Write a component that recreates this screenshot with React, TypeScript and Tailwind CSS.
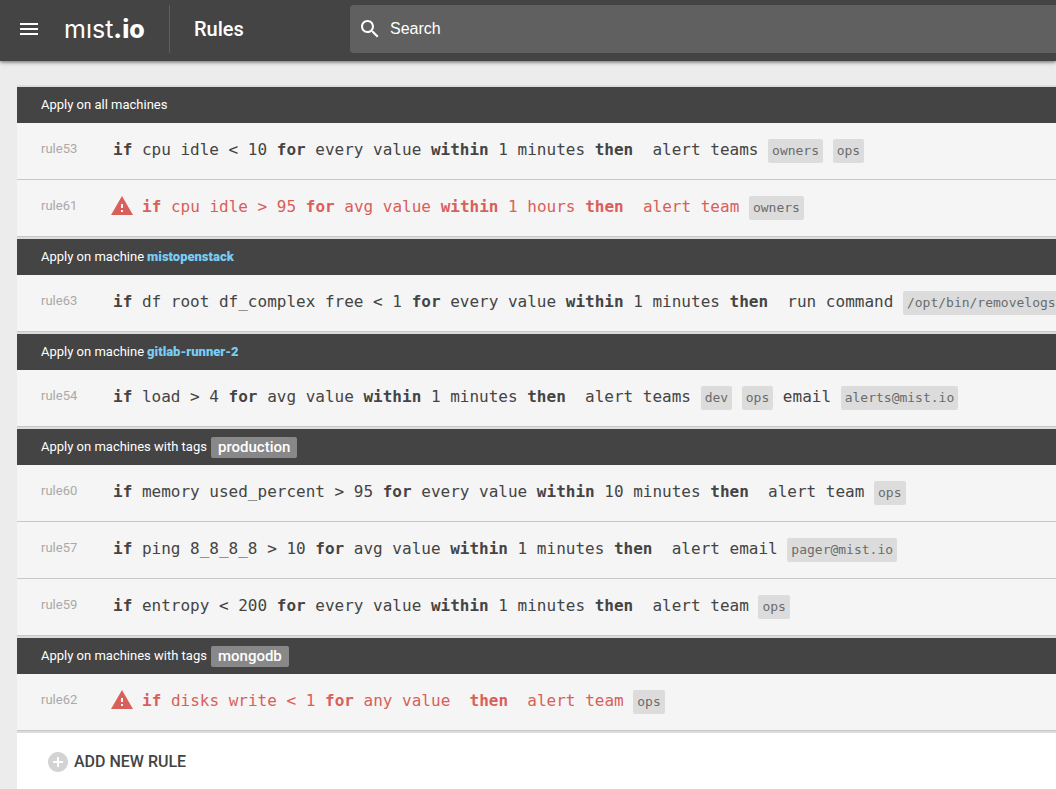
import React from "react";

type Part = { kind: "text" | "key" | "chip"; value: string };

const t = (value: string): Part => ({ kind: "text", value });
const k = (value: string): Part => ({ kind: "key", value });
const c = (value: string): Part => ({ kind: "chip", value });

type Rule = { id: string; alert?: boolean; parts: Part[] };
type Group = { label: string; machine?: string; tag?: string; rules: Rule[] };

const groups: Group[] = [
  {
    label: "Apply on all machines",
    rules: [
      {
        id: "rule53",
        parts: [k("if"), t(" cpu idle < 10 "), k("for"), t(" every value "), k("within"), t(" 1 minutes "), k("then"), t("  alert teams "), c("owners"), t(" "), c("ops")],
      },
      {
        id: "rule61",
        alert: true,
        parts: [k("if"), t(" cpu idle > 95 "), k("for"), t(" avg value "), k("within"), t(" 1 hours "), k("then"), t("  alert team "), c("owners")],
      },
    ],
  },
  {
    label: "Apply on machine",
    machine: "mistopenstack",
    rules: [
      {
        id: "rule63",
        parts: [k("if"), t(" df root df_complex free < 1 "), k("for"), t(" every value "), k("within"), t(" 1 minutes "), k("then"), t("  run command "), c("/opt/bin/removelogs.")],
      },
    ],
  },
  {
    label: "Apply on machine",
    machine: "gitlab-runner-2",
    rules: [
      {
        id: "rule54",
        parts: [k("if"), t(" load > 4 "), k("for"), t(" avg value "), k("within"), t(" 1 minutes "), k("then"), t("  alert teams "), c("dev"), t(" "), c("ops"), t(" email "), c("alerts@mist.io")],
      },
    ],
  },
  {
    label: "Apply on machines with tags",
    tag: "production",
    rules: [
      {
        id: "rule60",
        parts: [k("if"), t(" memory used_percent > 95 "), k("for"), t(" every value "), k("within"), t(" 10 minutes "), k("then"), t("  alert team "), c("ops")],
      },
      {
        id: "rule57",
        parts: [k("if"), t(" ping 8_8_8_8 > 10 "), k("for"), t(" avg value "), k("within"), t(" 1 minutes "), k("then"), t("  alert email "), c("pager@mist.io")],
      },
      {
        id: "rule59",
        parts: [k("if"), t(" entropy < 200 "), k("for"), t(" every value "), k("within"), t(" 1 minutes "), k("then"), t("  alert team "), c("ops")],
      },
    ],
  },
  {
    label: "Apply on machines with tags",
    tag: "mongodb",
    rules: [
      {
        id: "rule62",
        alert: true,
        parts: [k("if"), t(" disks write < 1 "), k("for"), t(" any value  "), k("then"), t("  alert team "), c("ops")],
      },
    ],
  },
];

function MenuIcon() {
  return (
    <svg viewBox="0 0 24 24" className="size-6 fill-current" aria-hidden="true">
      <path d="M3 18h18v-2H3v2zm0-5h18v-2H3v2zm0-7v2h18V6H3z" />
    </svg>
  );
}

function SearchIcon() {
  return (
    <svg viewBox="0 0 24 24" className="size-6 shrink-0 fill-current" aria-hidden="true">
      <path d="M15.5 14h-.79l-.28-.27C15.41 12.59 16 11.11 16 9.5 16 5.91 13.09 3 9.5 3S3 5.91 3 9.5 5.91 16 9.5 16c1.61 0 3.09-.59 4.23-1.57l.27.28v.79l5 4.99L20.49 19l-4.99-5zm-6 0C7.01 14 5 11.99 5 9.5S7.01 5 9.5 5 14 7.01 14 9.5 11.99 14 9.5 14z" />
    </svg>
  );
}

function WarningIcon() {
  return (
    <svg viewBox="0 0 24 24" className="mr-2 mb-[2px] size-6 shrink-0 fill-current" aria-hidden="true">
      <path d="M1 21h22L12 2 1 21zm12-3h-2v-2h2v2zm0-4h-2v-4h2v4z" />
    </svg>
  );
}

function AddIcon() {
  return (
    <svg viewBox="0 0 24 24" className="size-6 fill-[#d3d3d3]" aria-hidden="true">
      <path d="M12 2C6.48 2 2 6.48 2 12s4.48 10 10 10 10-4.48 10-10S17.52 2 12 2zm5 11h-4v4h-2v-4H7v-2h4V7h2v4h4v2z" />
    </svg>
  );
}

function RulePart({ part }: { part: Part }) {
  if (part.kind === "key") return <b>{part.value}</b>;
  if (part.kind === "chip")
    return (
      <span className="inline-block rounded-xs bg-[#dcdcdc] px-1 align-baseline text-[13px] leading-6 text-[#6b6b6b]">
        {part.value}
      </span>
    );
  return <>{part.value}</>;
}

function RuleRow({ rule }: { rule: Rule }) {
  return (
    <li className="flex h-[57px] border-b border-[#c8c8c8] pl-6">
      <span className="w-[72px] shrink-0 pt-4 text-[13px] leading-5 text-[#a9a9a9]">{rule.id}</span>
      <div
        className={
          rule.alert
            ? "-ml-[3px] flex items-center pb-[2px] font-['DejaVu_Sans_Mono',monospace] text-base text-[#d9605a]"
            : "flex items-center pb-[2px] font-['DejaVu_Sans_Mono',monospace] text-base text-[#444]"
        }
      >
        {rule.alert && <WarningIcon />}
        <span className="leading-[26px] whitespace-pre">
          {rule.parts.map((part, i) => (
            <RulePart key={i} part={part} />
          ))}
        </span>
      </div>
    </li>
  );
}

function RuleGroup({ group }: { group: Group }) {
  return (
    <section className="border-t-2 border-[#dcdcdc]">
      <h2 className="flex h-9 items-center bg-[#444] pl-6 text-[13px] text-white">
        <span>{group.label}</span>
        {group.machine && (
          <a href="#machine" className="ml-[3px] font-black text-[#78cdf5]">
            {group.machine}
          </a>
        )}
        {group.tag && (
          <span className="ml-1 rounded-xs bg-[#888] px-[7px] text-[15px] leading-[21px] font-medium">
            {group.tag}
          </span>
        )}
      </h2>
      <ul>
        {group.rules.map((rule) => (
          <RuleRow key={rule.id} rule={rule} />
        ))}
      </ul>
    </section>
  );
}

export default function App() {
  return (
    <div className="flex h-screen flex-col overflow-hidden bg-[#ececec] font-['Roboto',sans-serif] text-[#444]">
      <header className="z-10 flex h-[61px] shrink-0 items-start bg-[#444] pt-[5px] text-white shadow-[0_1px_4px_rgba(0,0,0,0.6)]">
        <div className="flex h-12 w-[350px] shrink-0 items-center">
          <button type="button" aria-label="Menu" className="ml-[17px]">
            <MenuIcon />
          </button>
          <a
            href="#home"
            className="ml-[23px] w-[105px] font-['Inter',sans-serif] text-[25px] leading-[46px]"
          >
            mıst<b className="font-extrabold">.io</b>
          </a>
          <h1 className="border-l border-[#5e5e5e] pl-6 text-xl leading-12 font-medium">Rules</h1>
        </div>
        <label className="flex h-12 flex-1 items-center gap-2 rounded-l bg-[#606060] pl-2">
          <SearchIcon />
          <input
            type="text"
            placeholder="Search"
            aria-label="Search"
            className="min-w-0 flex-1 bg-transparent font-['Liberation_Sans',sans-serif] text-base text-white outline-none placeholder:text-white"
          />
        </label>
      </header>
      <main className="mt-6 ml-[17px] flex-1 overflow-hidden bg-white">
        <div className="border-b-2 border-[#dcdcdc] bg-[#f5f5f5]">
          {groups.map((group) => (
            <RuleGroup key={group.rules[0].id} group={group} />
          ))}
        </div>
        <button type="button" className="flex h-[58px] items-center gap-1 pl-[29px] font-medium">
          <AddIcon />
          ADD NEW RULE
        </button>
      </main>
    </div>
  );
}
